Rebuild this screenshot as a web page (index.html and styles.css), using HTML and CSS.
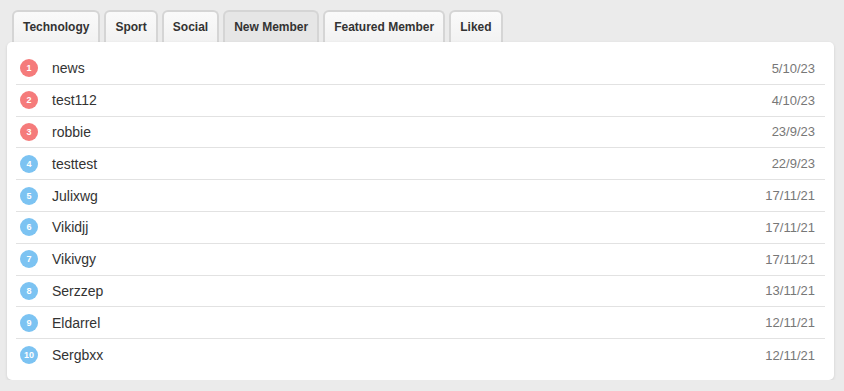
FILE: index.html
```html
<!DOCTYPE html>
<html>

<head>
    <meta charset="UTF-8">
    <title>Members</title>
    <link rel="stylesheet" href="styles.css">
</head>

<body>
    <div class="tabs">
        <div class="tab">Technology</div>
        <div class="tab">Sport</div>
        <div class="tab">Social</div>
        <div class="tab active">New Member</div>
        <div class="tab">Featured Member</div>
        <div class="tab">Liked</div>
    </div>
    <div class="panel">
        <ul class="list">
            <li><span class="num hot">1</span><span class="name">news</span><span class="date">5/10/23</span></li>
            <li><span class="num hot">2</span><span class="name">test112</span><span class="date">4/10/23</span></li>
            <li><span class="num hot">3</span><span class="name">robbie</span><span class="date">23/9/23</span></li>
            <li><span class="num">4</span><span class="name">testtest</span><span class="date">22/9/23</span></li>
            <li><span class="num">5</span><span class="name">Julixwg</span><span class="date">17/11/21</span></li>
            <li><span class="num">6</span><span class="name">Vikidjj</span><span class="date">17/11/21</span></li>
            <li><span class="num">7</span><span class="name">Vikivgy</span><span class="date">17/11/21</span></li>
            <li><span class="num">8</span><span class="name">Serzzep</span><span class="date">13/11/21</span></li>
            <li><span class="num">9</span><span class="name">Eldarrel</span><span class="date">12/11/21</span></li>
            <li><span class="num">10</span><span class="name">Sergbxx</span><span class="date">12/11/21</span></li>
        </ul>
    </div>
</body>

</html>
```

FILE: styles.css
```css
body {
    font-family: "Liberation Sans", Arial, sans-serif;
    background-color: #ebebeb;
    margin: 0;
    padding: 10px 10px 0 7px;
}

.tabs {
    display: flex;
    gap: 4px;
    padding-left: 5px;
    position: relative;
    z-index: 1;
}

.tab {
    height: 30px;
    line-height: 30px;
    padding: 0 9px;
    font-size: 12px;
    font-weight: bold;
    color: #333;
    background: linear-gradient(#fafafa, #f2f2f2);
    border: 2px solid #d5d5d5;
    border-bottom: none;
    border-radius: 6px 6px 0 0;
}

.tab.active {
    background: #e6e6e6;
}

.panel {
    width: 827px;
    background-color: #fff;
    border-radius: 5px;
    box-shadow: 0 1px 3px rgba(0, 0, 0, 0.12);
    padding: 11px 9px 9px 9px;
    box-sizing: border-box;
    position: relative;
    z-index: 2;
}

.list {
    list-style: none;
    margin: 0;
    padding: 0;
}

.list li {
    display: flex;
    align-items: center;
    height: 31.8px;
    padding: 0 10px 0 4px;
    border-bottom: 1px solid #e2e2e2;
    box-sizing: border-box;
}

.list li:last-child {
    border-bottom: none;
}

.num {
    width: 18px;
    height: 18px;
    border-radius: 50%;
    background-color: #7cc3f2;
    color: #fff;
    font-size: 9px;
    font-weight: bold;
    display: flex;
    align-items: center;
    justify-content: center;
    flex-shrink: 0;
}

.num.hot {
    background-color: #f57b7b;
}

.name {
    margin-left: 14px;
    font-size: 14px;
    color: #333;
    flex: 1;
}

.date {
    font-size: 13px;
    color: #777;
}
```
